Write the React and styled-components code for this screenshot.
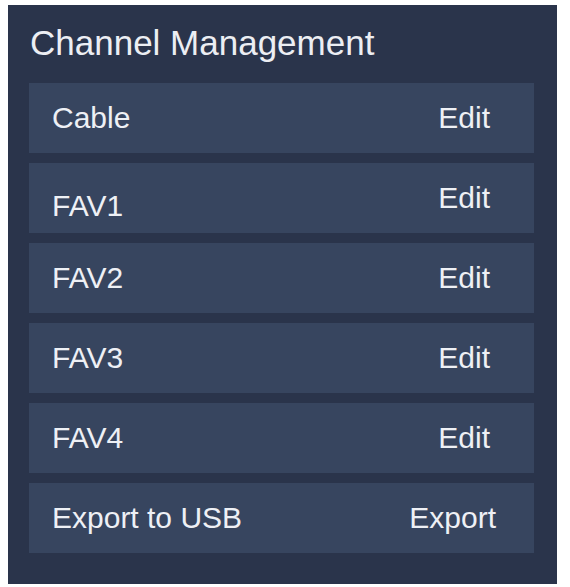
import styled, { createGlobalStyle } from "styled-components";

const GlobalStyle = createGlobalStyle`
    html, body {
        margin: 0;
        padding: 0;
        background-color: #ffffff;
    }
    body {
        font-family: "Liberation Sans", Arial, sans-serif;
    }
`;

const Page = styled.div`
    padding: 5px 13px 3px 8px;
`;

const Panel = styled.section`
    width: 549px;
    box-sizing: border-box;
    background-color: #2a344b;
    padding: 18px 23px 31px 21px;
    display: flex;
    flex-direction: column;
`;

const Titulo = styled.h1`
    margin: 0 0 20px 1px;
    font-size: 35px;
    line-height: 40px;
    font-weight: 400;
    color: #eceef3;
`;

const Lista = styled.ul`
    list-style: none;
    margin: 0;
    padding: 0;
    display: flex;
    flex-direction: column;
    gap: 10px;
`;

const Linha = styled.li`
    height: 70px;
    background-color: #37455f;
    display: flex;
    align-items: center;
    justify-content: space-between;
    padding: 0 ${props => props.recuo || 44}px 0 23px;
`;

const Rotulo = styled.span`
    font-size: 30px;
    line-height: 34px;
    color: #eef0f5;
    position: relative;
    top: ${props => props.desce || 0}px;
`;

const Acao = styled.span`
    font-size: 30px;
    line-height: 34px;
    color: #eef0f5;
`;

const itens = [
    { rotulo: "Cable", acao: "Edit" },
    { rotulo: "FAV1", acao: "Edit", desce: 8 },
    { rotulo: "FAV2", acao: "Edit" },
    { rotulo: "FAV3", acao: "Edit" },
    { rotulo: "FAV4", acao: "Edit" },
    { rotulo: "Export to USB", acao: "Export", recuo: 38 },
];

export default function App() {
    return (
        <Page>
            <GlobalStyle />
            <Panel>
                <Titulo>Channel Management</Titulo>
                <Lista>
                    {itens.map(item => (
                        <Linha key={item.rotulo} recuo={item.recuo}>
                            <Rotulo desce={item.desce}>{item.rotulo}</Rotulo>
                            <Acao>{item.acao}</Acao>
                        </Linha>
                    ))}
                </Lista>
            </Panel>
        </Page>
    );
}
